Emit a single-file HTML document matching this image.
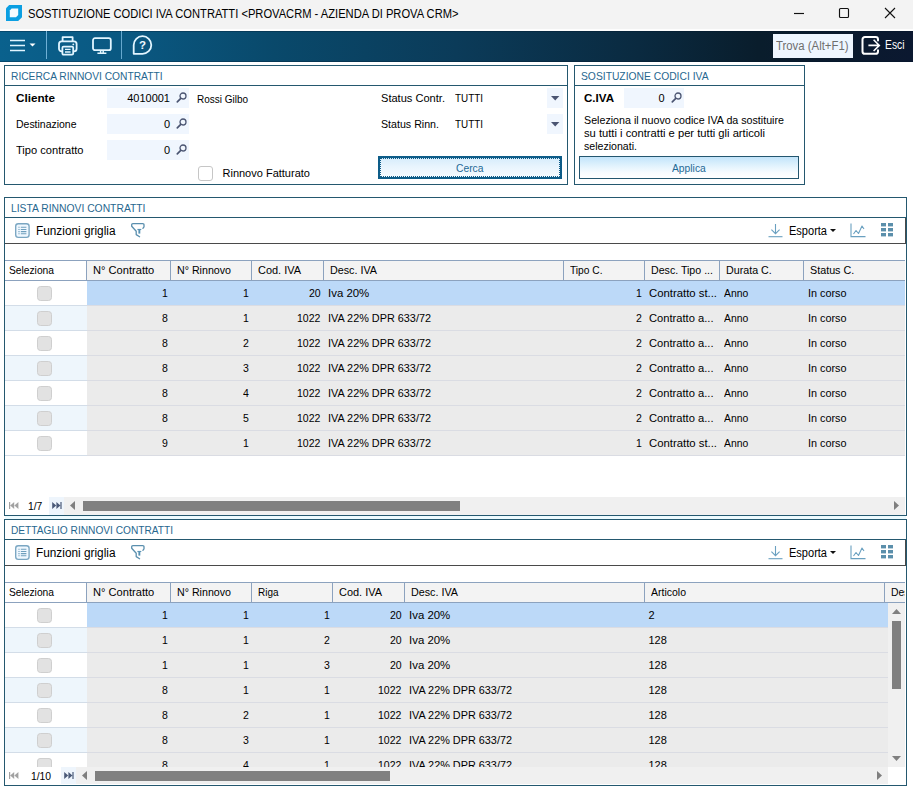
<!DOCTYPE html>
<html><head><meta charset="utf-8">
<style>
*{box-sizing:border-box;margin:0;padding:0}
html,body{width:913px;height:792px;overflow:hidden;background:#fff}
body{position:relative;font-family:"Liberation Sans",sans-serif;font-size:11px;color:#000}
.a{position:absolute}
.t{position:absolute;white-space:pre}
svg{position:absolute;overflow:visible}
</style></head><body>
<div class="a" style="left:0px;top:0px;width:913px;height:29px;background:#f3f3f3"></div>
<div class="a" style="left:0px;top:29px;width:913px;height:2px;background:#fdfdfd"></div>
<svg style="left:6px;top:5px" width="16" height="16" viewBox="0 0 16 16"><path d="M3.2 0H16V12.2L12.2 16H0V3.2Z" fill="#0c9fe2"/><path d="M5.6 3.6H12.2V10L10 12.2H3.8V5.4Z" fill="#f6fbff"/></svg>
<svg style="left:794px;top:7px" width="110" height="12" viewBox="0 0 110 12"><path d="M0 6.5H10" stroke="#111" stroke-width="1.15" fill="none"/><rect x="45.5" y="1.5" width="9" height="9" rx="1" stroke="#111" stroke-width="1.15" fill="none"/><path d="M91 1L101 11M101 1L91 11" stroke="#111" stroke-width="1.1" fill="none"/></svg>
<div class="a" style="left:0px;top:31px;width:913px;height:31px;background:linear-gradient(90deg,#0a618d 0%,#0a5780 15%,#09496b 30%,#0b3b59 50%,#0a2a40 70%,#091d2c 83%,#0b1830 100%);box-shadow:inset 0 1px rgba(0,20,40,.3),inset 0 -1px rgba(0,20,40,.3)"></div>
<svg style="left:9px;top:38px" width="28" height="16" viewBox="0 0 28 16"><path d="M1 2.5H16M1 7.5H16M1 12.5H16" stroke="#e2f5ff" stroke-width="1.6" fill="none"/><path d="M20.5 5.5H26.5L23.5 8.5Z" fill="#fff"/></svg>
<div class="a" style="left:46px;top:31px;width:1px;height:28px;background:#6fb0d6"></div>
<div class="a" style="left:121px;top:31px;width:1px;height:28px;background:#66a8ce"></div>
<svg style="left:58px;top:36px" width="20" height="20" viewBox="0 0 20 20"><g fill="none" stroke="#e2f5ff" stroke-width="1.8" stroke-linejoin="round"><path d="M4.6 5.4V1.2H14.6V5.4"/><rect x="1" y="5.4" width="17.6" height="10" rx="2.6"/><rect x="4.4" y="10.6" width="10.8" height="8" rx="1.2" fill="#0a5c87"/><path d="M7 13.4H12.6M7 16H12.6" stroke-width="1.3"/></g><circle cx="15.3" cy="8.4" r="0.9" fill="#e2f5ff"/></svg>
<svg style="left:92px;top:37px" width="20" height="18" viewBox="0 0 20 18"><g fill="none" stroke="#e2f5ff" stroke-width="1.8" stroke-linejoin="round"><rect x="1" y="1.2" width="17.8" height="12" rx="2"/><path d="M8.6 13.4V15.6M11.2 13.4V15.6M5.4 16.2H14.4" stroke-width="1.5"/></g></svg>
<svg style="left:132px;top:35.1px" width="21" height="20" viewBox="0 0 21 20"><path d="M10.5 1.2A8.8 8.8 0 1 1 10.5 18.8H1.7V10A8.8 8.8 0 0 1 10.5 1.2Z" fill="none" stroke="#e2f5ff" stroke-width="1.8" stroke-linejoin="round"/></svg>
<div class="a" style="left:773px;top:34px;width:80px;height:24px;background:#eef6ff"></div>
<svg style="left:861px;top:36px" width="20" height="19" viewBox="0 0 20 19"><g fill="none" stroke="#fff" stroke-linejoin="round" stroke-linecap="round"><path stroke-width="2" d="M17 4.6V3.4A2.4 2.4 0 0 0 14.6 1H3.9A2.4 2.4 0 0 0 1.5 3.4V15.4A2.4 2.4 0 0 0 3.9 17.8H14.6A2.4 2.4 0 0 0 17 15.4V14.2"/><path stroke-width="1.6" d="M7.4 9.4H18M12.6 3.8L18.3 9.4L12.6 15" stroke-linecap="butt" stroke-linejoin="miter"/></g></svg>
<div class="a" style="left:4px;top:65px;width:564px;height:120px;border:1px solid #24586f;background:#fff"></div>
<div class="a" style="left:5px;top:85px;width:562px;height:1px;background:#24586f"></div>
<div class="a" style="left:107px;top:88px;width:82px;height:20px;background:#f0f6fe"></div>
<svg style="left:176px;top:92.4px" width="11" height="11" viewBox="0 0 11 11"><circle cx="7" cy="4" r="3" fill="none" stroke="#4b5572" stroke-width="1.3"/><path d="M4.8 6.3L1.3 9.8" stroke="#4b5572" stroke-width="1.7" stroke-linecap="round"/></svg>
<div class="a" style="left:107px;top:114px;width:82px;height:20px;background:#f0f6fe"></div>
<svg style="left:176px;top:118.4px" width="11" height="11" viewBox="0 0 11 11"><circle cx="7" cy="4" r="3" fill="none" stroke="#4b5572" stroke-width="1.3"/><path d="M4.8 6.3L1.3 9.8" stroke="#4b5572" stroke-width="1.7" stroke-linecap="round"/></svg>
<div class="a" style="left:107px;top:140px;width:82px;height:20px;background:#f0f6fe"></div>
<svg style="left:176px;top:144.4px" width="11" height="11" viewBox="0 0 11 11"><circle cx="7" cy="4" r="3" fill="none" stroke="#4b5572" stroke-width="1.3"/><path d="M4.8 6.3L1.3 9.8" stroke="#4b5572" stroke-width="1.7" stroke-linecap="round"/></svg>
<div class="a" style="left:198px;top:166px;width:15px;height:15px;border:1.4px solid #c6c6c6;border-radius:3px;background:#fff"></div>
<div class="a" style="left:547px;top:88px;width:16px;height:20px;background:#f0f6fe"></div>
<svg style="left:551.2px;top:95.6px" width="8.4" height="4.4" viewBox="0 0 8.4 4.4"><path d="M0 0H8.4L4.2 4.4Z" fill="#4b5572"/></svg>
<div class="a" style="left:547px;top:114px;width:16px;height:20px;background:#f0f6fe"></div>
<svg style="left:551.2px;top:121.6px" width="8.4" height="4.4" viewBox="0 0 8.4 4.4"><path d="M0 0H8.4L4.2 4.4Z" fill="#4b5572"/></svg>
<div class="a" style="left:378px;top:156px;width:184px;height:23px;border:2px solid #0d5c88;background:linear-gradient(180deg,#d6ecfb 0%,#e8f4fd 45%,#f6fbff 100%)"></div>
<div class="a" style="left:380px;top:158px;width:180px;height:19px;border:1px dotted #0d5c88"></div>
<div class="a" style="left:574px;top:65px;width:231px;height:120px;border:1px solid #24586f;background:#fff"></div>
<div class="a" style="left:575px;top:85px;width:229px;height:1px;background:#24586f"></div>
<div class="a" style="left:624px;top:88px;width:60px;height:20px;background:#f0f6fe"></div>
<svg style="left:671px;top:92.4px" width="11" height="11" viewBox="0 0 11 11"><circle cx="7" cy="4" r="3" fill="none" stroke="#4b5572" stroke-width="1.3"/><path d="M4.8 6.3L1.3 9.8" stroke="#4b5572" stroke-width="1.7" stroke-linecap="round"/></svg>
<div class="a" style="left:579px;top:156px;width:220px;height:23px;border:1px solid #24566f;background:linear-gradient(180deg,#c2e4fa 0%,#e0f2fd 40%,#f8fcff 75%,#fff 100%)"></div>
<div class="a" style="left:4px;top:197px;width:903px;height:319px;border:1px solid #24586f;background:#fff"></div>
<div class="a" style="left:5px;top:217px;width:901px;height:1px;background:#24586f"></div>
<div class="a" style="left:5px;top:243px;width:901px;height:1px;background:#4a4a4a"></div>
<div class="a" style="left:905px;top:218px;width:1px;height:26px;background:#4a4a4a"></div>
<svg style="left:15.2px;top:223px" width="15" height="15" viewBox="0 0 15 15"><rect x="0.7" y="0.7" width="13.4" height="13.6" rx="2.6" fill="#f0f8ff" stroke="#7aa6c2" stroke-width="1.35"/><path d="M3 4.2H5.3M3 6.45H5.3M3 8.6H5.3M3 10.75H5.3" stroke="#a5c4d8" stroke-width="1.15"/><path d="M6 4.2H11.4M6 6.45H11.4M6 8.6H11.4M6 10.75H11.4" stroke="#6f9fbd" stroke-width="1.15"/></svg>
<svg style="left:130.6px;top:223.2px" width="15" height="15" viewBox="0 0 15 15"><path d="M11.9 5.3L13 3.9V1.9Q13 0.7 11.8 0.7H1.9Q0.7 0.7 0.7 1.9V3.3L5.2 8.3V11.6L8.6 13.7" fill="none" stroke="#5a8fae" stroke-width="1.3" stroke-linejoin="round" stroke-linecap="round"/><path d="M6.4 6.5H10.3" stroke="#5f96b6" stroke-width="1.2"/><path d="M8.35 6.5V10.6" stroke="#5590b2" stroke-width="1.9"/></svg>
<svg style="left:768px;top:223px" width="15" height="15" viewBox="0 0 15 15"><path d="M7.5 1V10.5M3.4 6.6L7.5 10.7L11.6 6.6" fill="none" stroke="#6aa0c0" stroke-width="1.1"/><path d="M0.5 13.7H14.5" stroke="#6aa0c0" stroke-width="1.1"/></svg>
<svg style="left:830px;top:229px" width="6" height="3" viewBox="0 0 6 3"><path d="M0 0H6L3 3Z" fill="#111"/></svg>
<svg style="left:850px;top:223px" width="16" height="15" viewBox="0 0 16 15"><path d="M1 0.5V13.6H15.5" fill="none" stroke="#6aa0c0" stroke-width="1.1"/><path d="M3.5 11L6 7.5L8.5 10.5L12 3L14 6" fill="none" stroke="#6aa0c0" stroke-width="1.1" stroke-linejoin="round"/></svg>
<svg style="left:881px;top:223px" width="12" height="14" viewBox="0 0 12 14"><g fill="#5b8fab"><rect x="0" y="0" width="5" height="3.4"/><rect x="7" y="0" width="5" height="3.4"/><rect x="0" y="5" width="5" height="3.4"/><rect x="7" y="5" width="5" height="3.4"/><rect x="0" y="10" width="5" height="3.4"/><rect x="7" y="10" width="5" height="3.4"/></g></svg>
<div class="a" style="left:5px;top:260px;width:900px;height:21px;background:#f3f3f3;border-top:1px solid #8ca2be;border-bottom:1px solid #8ca2be"></div>
<div class="a" style="left:5px;top:261px;width:82px;height:19px;background:#fff"></div>
<div class="a" style="left:86px;top:261px;width:1px;height:19px;background:#8ca2be"></div>
<div class="a" style="left:170px;top:261px;width:1px;height:19px;background:#8ca2be"></div>
<div class="a" style="left:251px;top:261px;width:1px;height:19px;background:#8ca2be"></div>
<div class="a" style="left:323px;top:261px;width:1px;height:19px;background:#8ca2be"></div>
<div class="a" style="left:563px;top:261px;width:1px;height:19px;background:#8ca2be"></div>
<div class="a" style="left:644px;top:261px;width:1px;height:19px;background:#8ca2be"></div>
<div class="a" style="left:719px;top:261px;width:1px;height:19px;background:#8ca2be"></div>
<div class="a" style="left:803px;top:261px;width:1px;height:19px;background:#8ca2be"></div>
<div class="a" style="left:5px;top:281px;width:82px;height:24px;background:#fff"></div>
<div class="a" style="left:87px;top:281px;width:818px;height:24px;background:#bcd9f8"></div>
<div class="a" style="left:5px;top:305px;width:82px;height:1px;background:#d3dde8"></div>
<div class="a" style="left:87px;top:305px;width:818px;height:1px;background:#dadce3"></div>
<div class="a" style="left:37px;top:286px;width:15px;height:15px;border:1px solid #cfcfcf;border-radius:3.5px;background:#e2e2e2"></div>
<div class="a" style="left:5px;top:306px;width:82px;height:24px;background:#eef6fc"></div>
<div class="a" style="left:87px;top:306px;width:818px;height:24px;background:#ebebeb"></div>
<div class="a" style="left:5px;top:330px;width:82px;height:1px;background:#d3dde8"></div>
<div class="a" style="left:87px;top:330px;width:818px;height:1px;background:#dadce3"></div>
<div class="a" style="left:37px;top:311px;width:15px;height:15px;border:1px solid #cfcfcf;border-radius:3.5px;background:#e2e2e2"></div>
<div class="a" style="left:5px;top:331px;width:82px;height:24px;background:#fff"></div>
<div class="a" style="left:87px;top:331px;width:818px;height:24px;background:#ebebeb"></div>
<div class="a" style="left:5px;top:355px;width:82px;height:1px;background:#d3dde8"></div>
<div class="a" style="left:87px;top:355px;width:818px;height:1px;background:#dadce3"></div>
<div class="a" style="left:37px;top:336px;width:15px;height:15px;border:1px solid #cfcfcf;border-radius:3.5px;background:#e2e2e2"></div>
<div class="a" style="left:5px;top:356px;width:82px;height:24px;background:#eef6fc"></div>
<div class="a" style="left:87px;top:356px;width:818px;height:24px;background:#ebebeb"></div>
<div class="a" style="left:5px;top:380px;width:82px;height:1px;background:#d3dde8"></div>
<div class="a" style="left:87px;top:380px;width:818px;height:1px;background:#dadce3"></div>
<div class="a" style="left:37px;top:361px;width:15px;height:15px;border:1px solid #cfcfcf;border-radius:3.5px;background:#e2e2e2"></div>
<div class="a" style="left:5px;top:381px;width:82px;height:24px;background:#fff"></div>
<div class="a" style="left:87px;top:381px;width:818px;height:24px;background:#ebebeb"></div>
<div class="a" style="left:5px;top:405px;width:82px;height:1px;background:#d3dde8"></div>
<div class="a" style="left:87px;top:405px;width:818px;height:1px;background:#dadce3"></div>
<div class="a" style="left:37px;top:386px;width:15px;height:15px;border:1px solid #cfcfcf;border-radius:3.5px;background:#e2e2e2"></div>
<div class="a" style="left:5px;top:406px;width:82px;height:24px;background:#eef6fc"></div>
<div class="a" style="left:87px;top:406px;width:818px;height:24px;background:#ebebeb"></div>
<div class="a" style="left:5px;top:430px;width:82px;height:1px;background:#d3dde8"></div>
<div class="a" style="left:87px;top:430px;width:818px;height:1px;background:#dadce3"></div>
<div class="a" style="left:37px;top:411px;width:15px;height:15px;border:1px solid #cfcfcf;border-radius:3.5px;background:#e2e2e2"></div>
<div class="a" style="left:5px;top:431px;width:82px;height:24px;background:#fff"></div>
<div class="a" style="left:87px;top:431px;width:818px;height:24px;background:#ebebeb"></div>
<div class="a" style="left:5px;top:455px;width:82px;height:1px;background:#d3dde8"></div>
<div class="a" style="left:87px;top:455px;width:818px;height:1px;background:#dadce3"></div>
<div class="a" style="left:37px;top:436px;width:15px;height:15px;border:1px solid #cfcfcf;border-radius:3.5px;background:#e2e2e2"></div>
<div class="a" style="left:5px;top:497px;width:901px;height:18px;background:#fff"></div>
<div class="a" style="left:49px;top:497px;width:15px;height:18px;background:#eef5fc"></div>
<div class="a" style="left:64px;top:497px;width:841px;height:18px;background:#f0f0f0"></div>
<svg style="left:9px;top:502px" width="10" height="7" viewBox="0 0 10 7"><path d="M0 0H1.2V7H0ZM5.2 0V7L1.2 3.5ZM9.4 0V7L5.4 3.5Z" fill="#a2a2a2"/></svg>
<svg style="left:51.8px;top:502px" width="10" height="7" viewBox="0 0 10 7"><path d="M9.6 0H8.4V7H9.6ZM4.4 0V7L8.4 3.5ZM0.2 0V7L4.2 3.5Z" fill="#4b5a78"/></svg>
<svg style="left:70px;top:501px" width="5" height="9" viewBox="0 0 5 9"><path d="M5 0V9L0 4.5Z" fill="#7f7f7f"/></svg>
<div class="a" style="left:83px;top:501px;width:377px;height:10px;background:#808080"></div>
<svg style="left:894px;top:501px" width="5" height="9" viewBox="0 0 5 9"><path d="M0 0V9L5 4.5Z" fill="#7f7f7f"/></svg>
<div class="a" style="left:5px;top:516px;width:901px;height:3px;background:#edfbff"></div>
<div class="a" style="left:4px;top:519px;width:903px;height:267px;border:1px solid #24586f;background:#fff"></div>
<div class="a" style="left:5px;top:539px;width:901px;height:1px;background:#24586f"></div>
<div class="a" style="left:5px;top:565px;width:901px;height:1px;background:#4a4a4a"></div>
<div class="a" style="left:905px;top:540px;width:1px;height:26px;background:#4a4a4a"></div>
<svg style="left:15.2px;top:545px" width="15" height="15" viewBox="0 0 15 15"><rect x="0.7" y="0.7" width="13.4" height="13.6" rx="2.6" fill="#f0f8ff" stroke="#7aa6c2" stroke-width="1.35"/><path d="M3 4.2H5.3M3 6.45H5.3M3 8.6H5.3M3 10.75H5.3" stroke="#a5c4d8" stroke-width="1.15"/><path d="M6 4.2H11.4M6 6.45H11.4M6 8.6H11.4M6 10.75H11.4" stroke="#6f9fbd" stroke-width="1.15"/></svg>
<svg style="left:130.6px;top:545.2px" width="15" height="15" viewBox="0 0 15 15"><path d="M11.9 5.3L13 3.9V1.9Q13 0.7 11.8 0.7H1.9Q0.7 0.7 0.7 1.9V3.3L5.2 8.3V11.6L8.6 13.7" fill="none" stroke="#5a8fae" stroke-width="1.3" stroke-linejoin="round" stroke-linecap="round"/><path d="M6.4 6.5H10.3" stroke="#5f96b6" stroke-width="1.2"/><path d="M8.35 6.5V10.6" stroke="#5590b2" stroke-width="1.9"/></svg>
<svg style="left:768px;top:545px" width="15" height="15" viewBox="0 0 15 15"><path d="M7.5 1V10.5M3.4 6.6L7.5 10.7L11.6 6.6" fill="none" stroke="#6aa0c0" stroke-width="1.1"/><path d="M0.5 13.7H14.5" stroke="#6aa0c0" stroke-width="1.1"/></svg>
<svg style="left:830px;top:551px" width="6" height="3" viewBox="0 0 6 3"><path d="M0 0H6L3 3Z" fill="#111"/></svg>
<svg style="left:850px;top:545px" width="16" height="15" viewBox="0 0 16 15"><path d="M1 0.5V13.6H15.5" fill="none" stroke="#6aa0c0" stroke-width="1.1"/><path d="M3.5 11L6 7.5L8.5 10.5L12 3L14 6" fill="none" stroke="#6aa0c0" stroke-width="1.1" stroke-linejoin="round"/></svg>
<svg style="left:881px;top:545px" width="12" height="14" viewBox="0 0 12 14"><g fill="#5b8fab"><rect x="0" y="0" width="5" height="3.4"/><rect x="7" y="0" width="5" height="3.4"/><rect x="0" y="5" width="5" height="3.4"/><rect x="7" y="5" width="5" height="3.4"/><rect x="0" y="10" width="5" height="3.4"/><rect x="7" y="10" width="5" height="3.4"/></g></svg>
<div class="a" style="left:5px;top:582px;width:900px;height:21px;background:#f3f3f3;border-top:1px solid #8ca2be;border-bottom:1px solid #8ca2be"></div>
<div class="a" style="left:5px;top:583px;width:82px;height:19px;background:#fff"></div>
<div class="a" style="left:86px;top:583px;width:1px;height:19px;background:#8ca2be"></div>
<div class="a" style="left:170px;top:583px;width:1px;height:19px;background:#8ca2be"></div>
<div class="a" style="left:251px;top:583px;width:1px;height:19px;background:#8ca2be"></div>
<div class="a" style="left:332px;top:583px;width:1px;height:19px;background:#8ca2be"></div>
<div class="a" style="left:404px;top:583px;width:1px;height:19px;background:#8ca2be"></div>
<div class="a" style="left:644px;top:583px;width:1px;height:19px;background:#8ca2be"></div>
<div class="a" style="left:884px;top:583px;width:1px;height:19px;background:#8ca2be"></div>
<div class="a" style="left:5px;top:603px;width:82px;height:24px;background:#fff"></div>
<div class="a" style="left:87px;top:603px;width:801px;height:24px;background:#bcd9f8"></div>
<div class="a" style="left:5px;top:627px;width:82px;height:1px;background:#d3dde8"></div>
<div class="a" style="left:87px;top:627px;width:801px;height:1px;background:#dadce3"></div>
<div class="a" style="left:37px;top:608px;width:15px;height:15px;border:1px solid #cfcfcf;border-radius:3.5px;background:#e2e2e2"></div>
<div class="a" style="left:5px;top:628px;width:82px;height:24px;background:#eef6fc"></div>
<div class="a" style="left:87px;top:628px;width:801px;height:24px;background:#ebebeb"></div>
<div class="a" style="left:5px;top:652px;width:82px;height:1px;background:#d3dde8"></div>
<div class="a" style="left:87px;top:652px;width:801px;height:1px;background:#dadce3"></div>
<div class="a" style="left:37px;top:633px;width:15px;height:15px;border:1px solid #cfcfcf;border-radius:3.5px;background:#e2e2e2"></div>
<div class="a" style="left:5px;top:653px;width:82px;height:24px;background:#fff"></div>
<div class="a" style="left:87px;top:653px;width:801px;height:24px;background:#ebebeb"></div>
<div class="a" style="left:5px;top:677px;width:82px;height:1px;background:#d3dde8"></div>
<div class="a" style="left:87px;top:677px;width:801px;height:1px;background:#dadce3"></div>
<div class="a" style="left:37px;top:658px;width:15px;height:15px;border:1px solid #cfcfcf;border-radius:3.5px;background:#e2e2e2"></div>
<div class="a" style="left:5px;top:678px;width:82px;height:24px;background:#eef6fc"></div>
<div class="a" style="left:87px;top:678px;width:801px;height:24px;background:#ebebeb"></div>
<div class="a" style="left:5px;top:702px;width:82px;height:1px;background:#d3dde8"></div>
<div class="a" style="left:87px;top:702px;width:801px;height:1px;background:#dadce3"></div>
<div class="a" style="left:37px;top:683px;width:15px;height:15px;border:1px solid #cfcfcf;border-radius:3.5px;background:#e2e2e2"></div>
<div class="a" style="left:5px;top:703px;width:82px;height:24px;background:#fff"></div>
<div class="a" style="left:87px;top:703px;width:801px;height:24px;background:#ebebeb"></div>
<div class="a" style="left:5px;top:727px;width:82px;height:1px;background:#d3dde8"></div>
<div class="a" style="left:87px;top:727px;width:801px;height:1px;background:#dadce3"></div>
<div class="a" style="left:37px;top:708px;width:15px;height:15px;border:1px solid #cfcfcf;border-radius:3.5px;background:#e2e2e2"></div>
<div class="a" style="left:5px;top:728px;width:82px;height:24px;background:#eef6fc"></div>
<div class="a" style="left:87px;top:728px;width:801px;height:24px;background:#ebebeb"></div>
<div class="a" style="left:5px;top:752px;width:82px;height:1px;background:#d3dde8"></div>
<div class="a" style="left:87px;top:752px;width:801px;height:1px;background:#dadce3"></div>
<div class="a" style="left:37px;top:733px;width:15px;height:15px;border:1px solid #cfcfcf;border-radius:3.5px;background:#e2e2e2"></div>
<div class="a" style="left:5px;top:753px;width:82px;height:14px;background:#fff"></div>
<div class="a" style="left:87px;top:753px;width:801px;height:14px;background:#ebebeb"></div>
<div class="a" style="left:37px;top:758px;width:15px;height:9px;border:1px solid #cfcfcf;border-bottom:none;border-radius:3.5px 3.5px 0 0;background:#e2e2e2"></div>
<div class="a" style="left:5px;top:767px;width:901px;height:17px;background:#fff"></div>
<div class="a" style="left:61px;top:767px;width:15px;height:17px;background:#eef5fc"></div>
<div class="a" style="left:76px;top:767px;width:812px;height:17px;background:#f0f0f0"></div>
<svg style="left:9px;top:772px" width="10" height="7" viewBox="0 0 10 7"><path d="M0 0H1.2V7H0ZM5.2 0V7L1.2 3.5ZM9.4 0V7L5.4 3.5Z" fill="#a2a2a2"/></svg>
<svg style="left:63.8px;top:772px" width="10" height="7" viewBox="0 0 10 7"><path d="M9.6 0H8.4V7H9.6ZM4.4 0V7L8.4 3.5ZM0.2 0V7L4.2 3.5Z" fill="#4b5a78"/></svg>
<svg style="left:81.8px;top:771px" width="5" height="9" viewBox="0 0 5 9"><path d="M5 0V9L0 4.5Z" fill="#7f7f7f"/></svg>
<div class="a" style="left:95px;top:771px;width:295px;height:10px;background:#808080"></div>
<svg style="left:877px;top:771px" width="5" height="9" viewBox="0 0 5 9"><path d="M0 0V9L5 4.5Z" fill="#7f7f7f"/></svg>
<div class="a" style="left:888px;top:603px;width:17px;height:164px;background:#f0f0f0"></div>
<svg style="left:892px;top:609px" width="9" height="5" viewBox="0 0 9 5"><path d="M0 5H9L4.5 0Z" fill="#7f7f7f"/></svg>
<div class="a" style="left:892px;top:621px;width:9px;height:68px;background:#808080"></div>
<svg style="left:892px;top:756px" width="9" height="5" viewBox="0 0 9 5"><path d="M0 0H9L4.5 5Z" fill="#7f7f7f"/></svg>
<div class="t" style="left:28.30px;top:6.27px;font-size:12.5px;line-height:16px;transform:scaleX(0.8923);transform-origin:0 0;">SOSTITUZIONE CODICI IVA CONTRATTI &lt;PROVACRM - AZIENDA DI PROVA CRM&gt;</div>
<div class="t" style="left:139.08px;top:37.42px;font-size:11.5px;line-height:16px;font-weight:bold;color:#f0faff;">?</div>
<div class="t" style="left:775.70px;top:38.34px;font-size:12px;line-height:16px;color:#6e6e6e;transform:scaleX(0.9467);transform-origin:0 0;">Trova (Alt+F1)</div>
<div class="t" style="left:884.50px;top:36.84px;font-size:12px;line-height:16px;color:#fff;transform:scaleX(0.8601);transform-origin:0 0;">Esci</div>
<div class="t" style="left:10.50px;top:68.69px;font-size:11px;line-height:15px;color:#27678f;transform:scaleX(0.9295);transform-origin:0 0;">RICERCA RINNOVI CONTRATTI</div>
<div class="t" style="left:15.50px;top:90.69px;font-size:11px;line-height:15px;font-weight:bold;transform:scaleX(1.0630);transform-origin:0 0;">Cliente</div>
<div class="t" style="left:15.50px;top:116.69px;font-size:11px;line-height:15px;transform:scaleX(0.9514);transform-origin:0 0;">Destinazione</div>
<div class="t" style="left:15.50px;top:142.69px;font-size:11px;line-height:15px;transform:scaleX(1.0096);transform-origin:0 0;">Tipo contratto</div>
<div class="t" style="left:127.17px;top:90.69px;font-size:11px;line-height:15px;">4010001</div>
<div class="t" style="left:163.88px;top:116.69px;font-size:11px;line-height:15px;">0</div>
<div class="t" style="left:163.88px;top:142.69px;font-size:11px;line-height:15px;">0</div>
<div class="t" style="left:197.00px;top:91.69px;font-size:11px;line-height:15px;transform:scaleX(0.9067);transform-origin:0 0;">Rossi Gilbo</div>
<div class="t" style="left:222.50px;top:165.69px;font-size:11px;line-height:15px;">Rinnovo Fatturato</div>
<div class="t" style="left:380.50px;top:90.69px;font-size:11px;line-height:15px;transform:scaleX(1.0064);transform-origin:0 0;">Status Contr.</div>
<div class="t" style="left:380.50px;top:116.69px;font-size:11px;line-height:15px;transform:scaleX(0.9679);transform-origin:0 0;">Status Rinn.</div>
<div class="t" style="left:455.00px;top:90.69px;font-size:11px;line-height:15px;transform:scaleX(0.8982);transform-origin:0 0;">TUTTI</div>
<div class="t" style="left:455.00px;top:116.69px;font-size:11px;line-height:15px;transform:scaleX(0.8982);transform-origin:0 0;">TUTTI</div>
<div class="t" style="left:455.75px;top:161.09px;font-size:11px;line-height:15px;color:#1f6a96;transform:scaleX(0.9372);transform-origin:0 0;">Cerca</div>
<div class="t" style="left:580.50px;top:68.69px;font-size:11px;line-height:15px;color:#27678f;transform:scaleX(0.9369);transform-origin:0 0;">SOSITUZIONE CODICI IVA</div>
<div class="t" style="left:584.00px;top:90.69px;font-size:11px;line-height:15px;font-weight:bold;transform:scaleX(1.0515);transform-origin:0 0;">C.IVA</div>
<div class="t" style="left:658.38px;top:90.69px;font-size:11px;line-height:15px;">0</div>
<div class="t" style="left:584.00px;top:112.69px;font-size:11px;line-height:15px;transform:scaleX(0.9715);transform-origin:0 0;">Seleziona il nuovo codice IVA da sostituire</div>
<div class="t" style="left:584.00px;top:125.69px;font-size:11px;line-height:15px;transform:scaleX(1.0173);transform-origin:0 0;">su tutti i contratti e per tutti gli articoli</div>
<div class="t" style="left:584.00px;top:138.69px;font-size:11px;line-height:15px;transform:scaleX(0.9628);transform-origin:0 0;">selezionati.</div>
<div class="t" style="left:671.92px;top:160.69px;font-size:11px;line-height:15px;color:#1f6a96;transform:scaleX(0.9355);transform-origin:0 0;">Applica</div>
<div class="t" style="left:10.50px;top:200.69px;font-size:11px;line-height:15px;color:#27678f;transform:scaleX(0.9391);transform-origin:0 0;">LISTA RINNOVI CONTRATTI</div>
<div class="t" style="left:36.00px;top:222.64px;font-size:12px;line-height:16px;transform:scaleX(0.9849);transform-origin:0 0;">Funzioni griglia</div>
<div class="t" style="left:788.80px;top:222.64px;font-size:12px;line-height:16px;transform:scaleX(0.9188);transform-origin:0 0;">Esporta</div>
<div class="t" style="left:9.20px;top:262.69px;font-size:11px;line-height:15px;transform:scaleX(0.9311);transform-origin:0 0;">Seleziona</div>
<div class="t" style="left:92.70px;top:262.69px;font-size:11px;line-height:15px;transform:scaleX(1.0106);transform-origin:0 0;">N° Contratto</div>
<div class="t" style="left:176.70px;top:262.69px;font-size:11px;line-height:15px;transform:scaleX(0.9683);transform-origin:0 0;">N° Rinnovo</div>
<div class="t" style="left:257.70px;top:262.69px;font-size:11px;line-height:15px;transform:scaleX(0.9949);transform-origin:0 0;">Cod. IVA</div>
<div class="t" style="left:329.70px;top:262.69px;font-size:11px;line-height:15px;transform:scaleX(0.9773);transform-origin:0 0;">Desc. IVA</div>
<div class="t" style="left:569.70px;top:262.69px;font-size:11px;line-height:15px;transform:scaleX(0.9273);transform-origin:0 0;">Tipo C.</div>
<div class="t" style="left:650.70px;top:262.69px;font-size:11px;line-height:15px;transform:scaleX(0.9657);transform-origin:0 0;">Desc. Tipo ...</div>
<div class="t" style="left:725.70px;top:262.69px;font-size:11px;line-height:15px;transform:scaleX(0.9718);transform-origin:0 0;">Durata C.</div>
<div class="t" style="left:809.70px;top:262.69px;font-size:11px;line-height:15px;transform:scaleX(0.9779);transform-origin:0 0;">Status C.</div>
<div class="t" style="left:161.55px;top:285.69px;font-size:11px;line-height:15px;transform:scaleX(0.9550);transform-origin:0 0;">1</div>
<div class="t" style="left:242.55px;top:285.69px;font-size:11px;line-height:15px;transform:scaleX(0.9550);transform-origin:0 0;">1</div>
<div class="t" style="left:308.70px;top:285.69px;font-size:11px;line-height:15px;transform:scaleX(0.9550);transform-origin:0 0;">20</div>
<div class="t" style="left:327.50px;top:285.69px;font-size:11px;line-height:15px;transform:scaleX(1.0377);transform-origin:0 0;">Iva 20%</div>
<div class="t" style="left:635.55px;top:285.69px;font-size:11px;line-height:15px;transform:scaleX(0.9550);transform-origin:0 0;">1</div>
<div class="t" style="left:648.50px;top:285.69px;font-size:11px;line-height:15px;transform:scaleX(1.0298);transform-origin:0 0;">Contratto st...</div>
<div class="t" style="left:723.50px;top:285.69px;font-size:11px;line-height:15px;transform:scaleX(0.9435);transform-origin:0 0;">Anno</div>
<div class="t" style="left:807.50px;top:285.69px;font-size:11px;line-height:15px;transform:scaleX(0.9836);transform-origin:0 0;">In corso</div>
<div class="t" style="left:161.55px;top:310.69px;font-size:11px;line-height:15px;transform:scaleX(0.9550);transform-origin:0 0;">8</div>
<div class="t" style="left:242.55px;top:310.69px;font-size:11px;line-height:15px;transform:scaleX(0.9550);transform-origin:0 0;">1</div>
<div class="t" style="left:297.02px;top:310.69px;font-size:11px;line-height:15px;transform:scaleX(0.9550);transform-origin:0 0;">1022</div>
<div class="t" style="left:327.50px;top:310.69px;font-size:11px;line-height:15px;transform:scaleX(0.9868);transform-origin:0 0;">IVA 22% DPR 633/72</div>
<div class="t" style="left:635.55px;top:310.69px;font-size:11px;line-height:15px;transform:scaleX(0.9550);transform-origin:0 0;">2</div>
<div class="t" style="left:648.50px;top:310.69px;font-size:11px;line-height:15px;transform:scaleX(1.0143);transform-origin:0 0;">Contratto a...</div>
<div class="t" style="left:723.50px;top:310.69px;font-size:11px;line-height:15px;transform:scaleX(0.9435);transform-origin:0 0;">Anno</div>
<div class="t" style="left:807.50px;top:310.69px;font-size:11px;line-height:15px;transform:scaleX(0.9836);transform-origin:0 0;">In corso</div>
<div class="t" style="left:161.55px;top:335.69px;font-size:11px;line-height:15px;transform:scaleX(0.9550);transform-origin:0 0;">8</div>
<div class="t" style="left:242.55px;top:335.69px;font-size:11px;line-height:15px;transform:scaleX(0.9550);transform-origin:0 0;">2</div>
<div class="t" style="left:297.02px;top:335.69px;font-size:11px;line-height:15px;transform:scaleX(0.9550);transform-origin:0 0;">1022</div>
<div class="t" style="left:327.50px;top:335.69px;font-size:11px;line-height:15px;transform:scaleX(0.9868);transform-origin:0 0;">IVA 22% DPR 633/72</div>
<div class="t" style="left:635.55px;top:335.69px;font-size:11px;line-height:15px;transform:scaleX(0.9550);transform-origin:0 0;">2</div>
<div class="t" style="left:648.50px;top:335.69px;font-size:11px;line-height:15px;transform:scaleX(1.0143);transform-origin:0 0;">Contratto a...</div>
<div class="t" style="left:723.50px;top:335.69px;font-size:11px;line-height:15px;transform:scaleX(0.9435);transform-origin:0 0;">Anno</div>
<div class="t" style="left:807.50px;top:335.69px;font-size:11px;line-height:15px;transform:scaleX(0.9836);transform-origin:0 0;">In corso</div>
<div class="t" style="left:161.55px;top:360.69px;font-size:11px;line-height:15px;transform:scaleX(0.9550);transform-origin:0 0;">8</div>
<div class="t" style="left:242.55px;top:360.69px;font-size:11px;line-height:15px;transform:scaleX(0.9550);transform-origin:0 0;">3</div>
<div class="t" style="left:297.02px;top:360.69px;font-size:11px;line-height:15px;transform:scaleX(0.9550);transform-origin:0 0;">1022</div>
<div class="t" style="left:327.50px;top:360.69px;font-size:11px;line-height:15px;transform:scaleX(0.9868);transform-origin:0 0;">IVA 22% DPR 633/72</div>
<div class="t" style="left:635.55px;top:360.69px;font-size:11px;line-height:15px;transform:scaleX(0.9550);transform-origin:0 0;">2</div>
<div class="t" style="left:648.50px;top:360.69px;font-size:11px;line-height:15px;transform:scaleX(1.0143);transform-origin:0 0;">Contratto a...</div>
<div class="t" style="left:723.50px;top:360.69px;font-size:11px;line-height:15px;transform:scaleX(0.9435);transform-origin:0 0;">Anno</div>
<div class="t" style="left:807.50px;top:360.69px;font-size:11px;line-height:15px;transform:scaleX(0.9836);transform-origin:0 0;">In corso</div>
<div class="t" style="left:161.55px;top:385.69px;font-size:11px;line-height:15px;transform:scaleX(0.9550);transform-origin:0 0;">8</div>
<div class="t" style="left:242.55px;top:385.69px;font-size:11px;line-height:15px;transform:scaleX(0.9550);transform-origin:0 0;">4</div>
<div class="t" style="left:297.02px;top:385.69px;font-size:11px;line-height:15px;transform:scaleX(0.9550);transform-origin:0 0;">1022</div>
<div class="t" style="left:327.50px;top:385.69px;font-size:11px;line-height:15px;transform:scaleX(0.9868);transform-origin:0 0;">IVA 22% DPR 633/72</div>
<div class="t" style="left:635.55px;top:385.69px;font-size:11px;line-height:15px;transform:scaleX(0.9550);transform-origin:0 0;">2</div>
<div class="t" style="left:648.50px;top:385.69px;font-size:11px;line-height:15px;transform:scaleX(1.0143);transform-origin:0 0;">Contratto a...</div>
<div class="t" style="left:723.50px;top:385.69px;font-size:11px;line-height:15px;transform:scaleX(0.9435);transform-origin:0 0;">Anno</div>
<div class="t" style="left:807.50px;top:385.69px;font-size:11px;line-height:15px;transform:scaleX(0.9836);transform-origin:0 0;">In corso</div>
<div class="t" style="left:161.55px;top:410.69px;font-size:11px;line-height:15px;transform:scaleX(0.9550);transform-origin:0 0;">8</div>
<div class="t" style="left:242.55px;top:410.69px;font-size:11px;line-height:15px;transform:scaleX(0.9550);transform-origin:0 0;">5</div>
<div class="t" style="left:297.02px;top:410.69px;font-size:11px;line-height:15px;transform:scaleX(0.9550);transform-origin:0 0;">1022</div>
<div class="t" style="left:327.50px;top:410.69px;font-size:11px;line-height:15px;transform:scaleX(0.9868);transform-origin:0 0;">IVA 22% DPR 633/72</div>
<div class="t" style="left:635.55px;top:410.69px;font-size:11px;line-height:15px;transform:scaleX(0.9550);transform-origin:0 0;">2</div>
<div class="t" style="left:648.50px;top:410.69px;font-size:11px;line-height:15px;transform:scaleX(1.0143);transform-origin:0 0;">Contratto a...</div>
<div class="t" style="left:723.50px;top:410.69px;font-size:11px;line-height:15px;transform:scaleX(0.9435);transform-origin:0 0;">Anno</div>
<div class="t" style="left:807.50px;top:410.69px;font-size:11px;line-height:15px;transform:scaleX(0.9836);transform-origin:0 0;">In corso</div>
<div class="t" style="left:161.55px;top:435.69px;font-size:11px;line-height:15px;transform:scaleX(0.9550);transform-origin:0 0;">9</div>
<div class="t" style="left:242.55px;top:435.69px;font-size:11px;line-height:15px;transform:scaleX(0.9550);transform-origin:0 0;">1</div>
<div class="t" style="left:297.02px;top:435.69px;font-size:11px;line-height:15px;transform:scaleX(0.9550);transform-origin:0 0;">1022</div>
<div class="t" style="left:327.50px;top:435.69px;font-size:11px;line-height:15px;transform:scaleX(0.9868);transform-origin:0 0;">IVA 22% DPR 633/72</div>
<div class="t" style="left:635.55px;top:435.69px;font-size:11px;line-height:15px;transform:scaleX(0.9550);transform-origin:0 0;">1</div>
<div class="t" style="left:648.50px;top:435.69px;font-size:11px;line-height:15px;transform:scaleX(1.0298);transform-origin:0 0;">Contratto st...</div>
<div class="t" style="left:723.50px;top:435.69px;font-size:11px;line-height:15px;transform:scaleX(0.9435);transform-origin:0 0;">Anno</div>
<div class="t" style="left:807.50px;top:435.69px;font-size:11px;line-height:15px;transform:scaleX(0.9836);transform-origin:0 0;">In corso</div>
<div class="t" style="left:27.70px;top:498.69px;font-size:11px;line-height:15px;transform:scaleX(0.9400);transform-origin:0 0;">1/7</div>
<div class="t" style="left:10.50px;top:522.69px;font-size:11px;line-height:15px;color:#27678f;transform:scaleX(0.9225);transform-origin:0 0;">DETTAGLIO RINNOVI CONTRATTI</div>
<div class="t" style="left:36.00px;top:544.64px;font-size:12px;line-height:16px;transform:scaleX(0.9849);transform-origin:0 0;">Funzioni griglia</div>
<div class="t" style="left:788.80px;top:544.64px;font-size:12px;line-height:16px;transform:scaleX(0.9188);transform-origin:0 0;">Esporta</div>
<div class="t" style="left:9.20px;top:584.69px;font-size:11px;line-height:15px;transform:scaleX(0.9311);transform-origin:0 0;">Seleziona</div>
<div class="t" style="left:92.70px;top:584.69px;font-size:11px;line-height:15px;transform:scaleX(1.0106);transform-origin:0 0;">N° Contratto</div>
<div class="t" style="left:176.70px;top:584.69px;font-size:11px;line-height:15px;transform:scaleX(0.9683);transform-origin:0 0;">N° Rinnovo</div>
<div class="t" style="left:257.70px;top:584.69px;font-size:11px;line-height:15px;transform:scaleX(0.9061);transform-origin:0 0;">Riga</div>
<div class="t" style="left:338.70px;top:584.69px;font-size:11px;line-height:15px;transform:scaleX(0.9949);transform-origin:0 0;">Cod. IVA</div>
<div class="t" style="left:410.70px;top:584.69px;font-size:11px;line-height:15px;transform:scaleX(0.9773);transform-origin:0 0;">Desc. IVA</div>
<div class="t" style="left:650.70px;top:584.69px;font-size:11px;line-height:15px;transform:scaleX(0.9540);transform-origin:0 0;">Articolo</div>
<div class="a" style="left:0;top:0;width:905px;height:792px;overflow:hidden"><div class="t" style="left:890.90px;top:584.69px;font-size:11px;line-height:15px;transform:scaleX(0.9457);transform-origin:0 0;">Des</div></div>
<div class="t" style="left:161.55px;top:607.69px;font-size:11px;line-height:15px;transform:scaleX(0.9550);transform-origin:0 0;">1</div>
<div class="t" style="left:242.55px;top:607.69px;font-size:11px;line-height:15px;transform:scaleX(0.9550);transform-origin:0 0;">1</div>
<div class="t" style="left:323.55px;top:607.69px;font-size:11px;line-height:15px;transform:scaleX(0.9550);transform-origin:0 0;">1</div>
<div class="t" style="left:389.70px;top:607.69px;font-size:11px;line-height:15px;transform:scaleX(0.9550);transform-origin:0 0;">20</div>
<div class="t" style="left:408.50px;top:607.69px;font-size:11px;line-height:15px;transform:scaleX(1.0377);transform-origin:0 0;">Iva 20%</div>
<div class="t" style="left:648.50px;top:607.69px;font-size:11px;line-height:15px;">2</div>
<div class="t" style="left:161.55px;top:632.69px;font-size:11px;line-height:15px;transform:scaleX(0.9550);transform-origin:0 0;">1</div>
<div class="t" style="left:242.55px;top:632.69px;font-size:11px;line-height:15px;transform:scaleX(0.9550);transform-origin:0 0;">1</div>
<div class="t" style="left:323.55px;top:632.69px;font-size:11px;line-height:15px;transform:scaleX(0.9550);transform-origin:0 0;">2</div>
<div class="t" style="left:389.70px;top:632.69px;font-size:11px;line-height:15px;transform:scaleX(0.9550);transform-origin:0 0;">20</div>
<div class="t" style="left:408.50px;top:632.69px;font-size:11px;line-height:15px;transform:scaleX(1.0377);transform-origin:0 0;">Iva 20%</div>
<div class="t" style="left:648.50px;top:632.69px;font-size:11px;line-height:15px;">128</div>
<div class="t" style="left:161.55px;top:657.69px;font-size:11px;line-height:15px;transform:scaleX(0.9550);transform-origin:0 0;">1</div>
<div class="t" style="left:242.55px;top:657.69px;font-size:11px;line-height:15px;transform:scaleX(0.9550);transform-origin:0 0;">1</div>
<div class="t" style="left:323.55px;top:657.69px;font-size:11px;line-height:15px;transform:scaleX(0.9550);transform-origin:0 0;">3</div>
<div class="t" style="left:389.70px;top:657.69px;font-size:11px;line-height:15px;transform:scaleX(0.9550);transform-origin:0 0;">20</div>
<div class="t" style="left:408.50px;top:657.69px;font-size:11px;line-height:15px;transform:scaleX(1.0377);transform-origin:0 0;">Iva 20%</div>
<div class="t" style="left:648.50px;top:657.69px;font-size:11px;line-height:15px;">128</div>
<div class="t" style="left:161.55px;top:682.69px;font-size:11px;line-height:15px;transform:scaleX(0.9550);transform-origin:0 0;">8</div>
<div class="t" style="left:242.55px;top:682.69px;font-size:11px;line-height:15px;transform:scaleX(0.9550);transform-origin:0 0;">1</div>
<div class="t" style="left:323.55px;top:682.69px;font-size:11px;line-height:15px;transform:scaleX(0.9550);transform-origin:0 0;">1</div>
<div class="t" style="left:378.02px;top:682.69px;font-size:11px;line-height:15px;transform:scaleX(0.9550);transform-origin:0 0;">1022</div>
<div class="t" style="left:408.50px;top:682.69px;font-size:11px;line-height:15px;transform:scaleX(0.9868);transform-origin:0 0;">IVA 22% DPR 633/72</div>
<div class="t" style="left:648.50px;top:682.69px;font-size:11px;line-height:15px;">128</div>
<div class="t" style="left:161.55px;top:707.69px;font-size:11px;line-height:15px;transform:scaleX(0.9550);transform-origin:0 0;">8</div>
<div class="t" style="left:242.55px;top:707.69px;font-size:11px;line-height:15px;transform:scaleX(0.9550);transform-origin:0 0;">2</div>
<div class="t" style="left:323.55px;top:707.69px;font-size:11px;line-height:15px;transform:scaleX(0.9550);transform-origin:0 0;">1</div>
<div class="t" style="left:378.02px;top:707.69px;font-size:11px;line-height:15px;transform:scaleX(0.9550);transform-origin:0 0;">1022</div>
<div class="t" style="left:408.50px;top:707.69px;font-size:11px;line-height:15px;transform:scaleX(0.9868);transform-origin:0 0;">IVA 22% DPR 633/72</div>
<div class="t" style="left:648.50px;top:707.69px;font-size:11px;line-height:15px;">128</div>
<div class="t" style="left:161.55px;top:732.69px;font-size:11px;line-height:15px;transform:scaleX(0.9550);transform-origin:0 0;">8</div>
<div class="t" style="left:242.55px;top:732.69px;font-size:11px;line-height:15px;transform:scaleX(0.9550);transform-origin:0 0;">3</div>
<div class="t" style="left:323.55px;top:732.69px;font-size:11px;line-height:15px;transform:scaleX(0.9550);transform-origin:0 0;">1</div>
<div class="t" style="left:378.02px;top:732.69px;font-size:11px;line-height:15px;transform:scaleX(0.9550);transform-origin:0 0;">1022</div>
<div class="t" style="left:408.50px;top:732.69px;font-size:11px;line-height:15px;transform:scaleX(0.9868);transform-origin:0 0;">IVA 22% DPR 633/72</div>
<div class="t" style="left:648.50px;top:732.69px;font-size:11px;line-height:15px;">128</div>
<div class="a" style="left:0;top:0;width:913px;height:767px;overflow:hidden"><div class="t" style="left:161.55px;top:757.69px;font-size:11px;line-height:15px;transform:scaleX(0.9550);transform-origin:0 0;">8</div></div>
<div class="a" style="left:0;top:0;width:913px;height:767px;overflow:hidden"><div class="t" style="left:242.55px;top:757.69px;font-size:11px;line-height:15px;transform:scaleX(0.9550);transform-origin:0 0;">4</div></div>
<div class="a" style="left:0;top:0;width:913px;height:767px;overflow:hidden"><div class="t" style="left:323.55px;top:757.69px;font-size:11px;line-height:15px;transform:scaleX(0.9550);transform-origin:0 0;">1</div></div>
<div class="a" style="left:0;top:0;width:913px;height:767px;overflow:hidden"><div class="t" style="left:378.02px;top:757.69px;font-size:11px;line-height:15px;transform:scaleX(0.9550);transform-origin:0 0;">1022</div></div>
<div class="a" style="left:0;top:0;width:913px;height:767px;overflow:hidden"><div class="t" style="left:408.50px;top:757.69px;font-size:11px;line-height:15px;transform:scaleX(0.9868);transform-origin:0 0;">IVA 22% DPR 633/72</div></div>
<div class="a" style="left:0;top:0;width:913px;height:767px;overflow:hidden"><div class="t" style="left:648.50px;top:757.69px;font-size:11px;line-height:15px;">128</div></div>
<div class="t" style="left:30.70px;top:768.69px;font-size:11px;line-height:15px;transform:scaleX(0.9400);transform-origin:0 0;">1/10</div>
</body></html>
